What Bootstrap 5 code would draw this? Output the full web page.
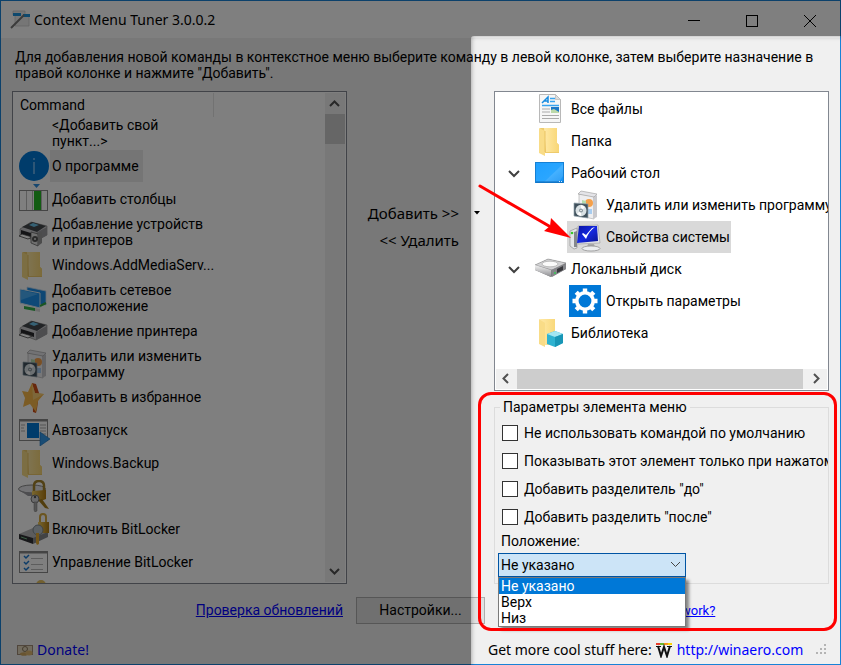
<!DOCTYPE html>
<html lang="ru">
<head>
<meta charset="utf-8">
<meta name="viewport" content="width=device-width, initial-scale=1">
<title>Context Menu Tuner 3.0.0.2</title>
<link href="https://cdn.jsdelivr.net/npm/bootstrap@5.3.0/dist/css/bootstrap.min.css" rel="stylesheet">
<style>
  :root { --ui: Roboto, "Liberation Sans", sans-serif; --caption: "Noto Sans", "Open Sans", sans-serif; }
  body { font: 14px/16px var(--ui); color: #000; background: #f0f0f0; }
  .stage { min-height: 100vh; overflow: hidden; }
  .window { border: 1px solid #1883d7; background: #f0f0f0; }
  .titlebar { background: #fff; height: 37px; padding: 0 1px 0 9px; }
  .titlebar h1 { font: 14px/20px var(--caption); }
  .win-btn { width: 58px; height: 36px; padding: 0; border: 0; background: none; }
  .plain-btn { border: 0; background: none; padding: 0; color: #000; }
  a { color: #00f; }
  .intro { padding: 11px 14px 10px; }
  .columns { display: grid; grid-template-columns: minmax(0, 1fr) 147px minmax(0, 1fr); padding: 0 11px; }
  .pane { background: #fff; border: 1px solid #828790; }
  .cmd-head { height: 24px; padding: 1px 0 0 7px; }
  .cmd-head span { width: 194px; height: 24px; line-height: 24px; border-right: 1px solid #e5e5e5; }
  .cmd-list { height: 467px; overflow: hidden; }
  .cmd { height: 33px; padding-left: 5px; }
  .cmd svg { width: 32px; height: 32px; flex: none; }
  .cmd span { padding: 0 4px 0 2px; line-height: 16px; }
  .cmd.chosen span { background: #ebebeb; line-height: 32px; }
  .vbar { width: 21px; background: #f0f0f0; border: 1px solid #fff; border-left: 0; }
  .vthumb { height: 30px; background: #cdcdcd; }
  .actions { padding-top: 112px; font: 15px/20px var(--caption); }
  .actions .row-a { height: 27px; padding-right: 14px; gap: 15px; }
  .actions .row-b { padding-right: 35px; }
  .tree { height: 300px; }
  .tree-list { padding-top: 1px; }
  .tree-row { height: 32px; padding-left: 10px; white-space: nowrap; }
  .tree-row svg { flex: none; }
  .tree-row .twist { width: 18px; height: 32px; }
  .tree-row .label { padding-left: 4px; }
  .tree-row.sub { padding-left: 72px; }
  .tree-row.sub .label { padding-left: 5px; }
  .tree-row.chosen span.wrap { background: #d9d9d9; }
  .tree-row .wrap { padding: 0 1px 0 2px; }
  .hbar { height: 20px; background: #f0f0f0; margin: 0 1px 1px; }
  .hthumb { background: #cdcdcd; margin-right: 3px; }
  .group { height: 177px; margin-top: 16px; border: 1px solid #dcdcdc; }
  .group legend { float: none; width: auto; font: inherit; line-height: 16px; margin: -9px 0 4px 5px; padding: 0 3px; background: #f0f0f0; }
  .opts { padding-bottom: 2px; }
  .opt { height: 28px; margin-left: 7px; white-space: nowrap; overflow: hidden; }
  .opt .form-check-input { width: 16px; height: 16px; margin: 0; border: 1px solid #333; border-radius: 0; background: #fff; flex: none; float: none; }
  .opt label { padding-left: 6px; }
  .pos-label { padding-left: 6px; }
  .combo { width: 188px; margin-left: 3px; }
  .combo select { width: 100%; height: 24px; border: 1px solid #0054a3; border-radius: 0; padding: 0 2px; background: #cce4f7; color: #000; appearance: none; font: inherit; display: block; }
  .combo svg { top: 8px; right: 5px; pointer-events: none; }
  .droplist { top: 24px; left: 0; right: 0; background: #fff; border: 1px solid #7a7a7a; box-shadow: 3px 3px 3px rgba(0,0,0,.45); z-index: 2; }
  .droplist li { padding-left: 2px; }
  .droplist li.chosen { background: #0078d7; color: #fff; }
  .links { padding: 18px 4px 0 3px; height: 42px; }
  .links.mid { padding: 13px 0 0 9px; }
  .links .settings { width: 129px; height: 27px; padding-bottom: 2px; border: 1px solid #adadad; background: #e1e1e1; }
  .links .how { font-size: 13px; padding-left: 3px; }
  .foot { height: 28px; padding: 0 13px 0 16px; font: 14px/20px var(--caption); }
  .foot a { text-decoration: none; }
  .foot .more { width: 339px; }
  .shade { top: 36px; left: 471px; right: -12px; bottom: -12px; border-radius: 3px; box-shadow: 0 0 5px 2000px rgba(0,0,0,.5), inset 0 0 5px rgba(0,0,0,.4); pointer-events: none; z-index: 4; }
  .callout { top: -16px; left: -17px; right: -9px; bottom: -48px; border: 3px solid #f00; border-radius: 13px; pointer-events: none; z-index: 5; }
  .pointer { top: 91px; left: -17px; pointer-events: none; z-index: 5; }
</style>
<script src="https://cdn.jsdelivr.net/npm/bootstrap@5.3.0/dist/js/bootstrap.bundle.min.js"></script>
</head>
<body>
<svg class="position-absolute" width="0" height="0" aria-hidden="true">
  <defs>
    <linearGradient id="gFold" x1="0" x2="1"><stop offset="0" stop-color="#ffe9a6"/><stop offset="1" stop-color="#f8d675"/></linearGradient>
    <linearGradient id="gScr" x1="0" y1="0" x2="1" y2="1"><stop offset="0" stop-color="#1fa0ff"/><stop offset=".6" stop-color="#2aa6ff"/><stop offset="1" stop-color="#1090f4"/></linearGradient>
    <linearGradient id="gNavy" x1="0" y1="0" x2="1" y2="1"><stop offset="0" stop-color="#0a14a0"/><stop offset=".5" stop-color="#1428e0"/><stop offset="1" stop-color="#0a1490"/></linearGradient>
    <linearGradient id="gSteel" x1="0" y1="0" x2="0" y2="1"><stop offset="0" stop-color="#f4f4f4"/><stop offset="1" stop-color="#8c8c90"/></linearGradient>
    <linearGradient id="gGold" x1="0" x2="1"><stop offset="0" stop-color="#f5cf60"/><stop offset="1" stop-color="#b07a10"/></linearGradient>
  </defs>
  <symbol id="i-info" viewBox="0 0 32 32"><circle cx="16" cy="16" r="15" fill="#0078d7"/><path d="M16 12v12M16 8v2" stroke="#8fc8f8" stroke-width="1.300"/></symbol>
  <symbol id="i-cols" viewBox="0 0 32 32"><path d="M15 1h7l-3.500 4z" fill="#2f8fe0"/><rect x="1.500" y="7.500" width="28" height="20" fill="#fff" stroke="#8a8a8a"/><path d="M8.500 8v19M14.500 8v19" stroke="#bbb"/><rect x="16" y="8" width="7" height="19" fill="#25b925"/><path d="M23.500 8v19" stroke="#bbb"/></symbol>
  <symbol id="i-printer" viewBox="0 0 32 32"><path d="M2 13l11-7 16 4v9l-11 6-16-6z" fill="#c9c9cc" stroke="#777" stroke-width=".6"/><path d="M4 11l10-5 14 4-9 6z" fill="#45484d"/><path d="M11 9l4-2 6 2-5 2z" fill="#6cc2e8"/><path d="M18 17l11-6v8l-11 6z" fill="#9a9a9e"/><path d="M3 14l13 4v4L3 18z" fill="#28282c"/><path d="M4 18l10 3-4 2-9-3z" fill="#fff" stroke="#444" stroke-width=".8"/></symbol>
  <symbol id="i-devices" viewBox="0 0 32 32"><use href="#i-printer" width="32" height="32"/><path d="M13 16l7 2v12l-7-3z" fill="#dedede" stroke="#555" stroke-width=".7"/><path d="M20 18l4-2v11l-4 3z" fill="#999"/><circle cx="17" cy="23" r="3" fill="#555"/><circle cx="17" cy="23" r="1" fill="#ddd"/></symbol>
  <symbol id="i-folder" viewBox="0 0 32 32"><path d="M5 3h17v15l2 2v8H10z" fill="#eecb6c"/><path d="M9 3h13v15l2 2v7H11z" fill="url(#gFold)"/><path d="M4 3l6 3v25l-6-3z" fill="#f9dc87"/><path d="M10 6v21" stroke="#e6bc58" stroke-width=".8"/></symbol>
  <symbol id="i-net" viewBox="0 0 32 32"><path d="M9 5l19 4v14l-19-2z" fill="#1d8ee8" stroke="#cde" stroke-width=".8"/><path d="M2 7l20 4v15L2 21z" fill="#1c93ef" stroke="#d5e8f5"/><path d="M3 8l17 4L3 18z" fill="#48aef8"/><path d="M6 24l11 2v3L6 27z" fill="#35b04a"/><path d="M17 26l5 1v3l-5-1z" fill="#ddd"/><path d="M22 24l6-3" stroke="#3a4" stroke-width="2"/></symbol>
  <symbol id="i-program" viewBox="0 0 32 32"><path d="M10 5l15 2v23l-15-3z" fill="#eeeef0" stroke="#aaa" stroke-width=".6"/><path d="M24 8l4-2v22l-4 2z" fill="#c9c9cd"/><path d="M9 5l3-3 16 3-3 3z" fill="#e4e4e8" stroke="#999" stroke-width=".6"/><circle cx="20" cy="14" r="4" fill="#f5a04a"/><path d="M13 11l4 1v4l-4-1z" fill="#b5dcae"/><path d="M18 20h5v5h-5z" fill="#a8cdf0"/><path d="M5 14l14 1v14L5 27z" fill="#40515c" stroke="#93a4ae" stroke-width=".7"/><ellipse cx="12" cy="21.500" rx="5.500" ry="5.800" fill="#d9e1e4"/><path d="M12 16l4 2-4 4zM12 27l-4-2 4-4z" fill="#fff"/><circle cx="12" cy="21.500" r="2" fill="#87949c"/><circle cx="12" cy="21.500" r=".8" fill="#fff"/></symbol>
  <symbol id="i-star" viewBox="0 0 32 32"><path d="M14 2l4 1 3 9-2 16-1 4-3-1z" fill="#cf4f18"/><path d="M14 2l3 10 9 1-6 7-2 11-6-8-7 3 2-9-3-7 6 1z" fill="#f8b84a"/><path d="M14 2l3 10 9 1-11 6z" fill="#fbcf75"/></symbol>
  <symbol id="i-autorun" viewBox="0 0 32 32"><rect x="1.500" y="5.500" width="28" height="21" fill="#fff" stroke="#8a8a8a"/><path d="M2 6.500h27" stroke="#888" stroke-width="2"/><path d="M3 11h4M3 14h3M3 17h4M22 11h6M22 14h6M22 17h6M22 20h6" stroke="#aaa"/><rect x="9" y="9" width="12" height="15" fill="#0078d7"/><path d="M22 18v14l10-7z" fill="#3398e8" stroke="#1a70b8" stroke-width=".6"/></symbol>
  <symbol id="i-keys" viewBox="0 0 32 32"><ellipse cx="14" cy="9" rx="13.500" ry="4" fill="#e4e4e8" stroke="#888"/><path d="M1 10q12 6 26 0l-8 6H10z" fill="#9b9ba0"/><path d="M16 12V6q0-5 5-5t5 5v6" fill="none" stroke="#a5842e" stroke-width="2.500"/><path d="M14 11l14-1v9l-5 2-9-2z" fill="url(#gGold)"/><path d="M24 19l7 10-4-1-7-8z" fill="#a47c1c"/><circle cx="17" cy="19" r="4" fill="#d4d4d6" stroke="#777"/><circle cx="17" cy="17" r="1.200" fill="#555"/><path d="M16 22h3v9l-2 1-1-2z" fill="#aaa" stroke="#777" stroke-width=".5"/></symbol>
  <symbol id="i-lockon" viewBox="0 0 32 32"><path d="M1 21l14-6 15 4v4l-14 7-15-5z" fill="#b8b8ba"/><path d="M1 21l14 4v6L1 26z" fill="#303134"/><path d="M3 24l6 2" stroke="#7b8" stroke-width="1"/><path d="M15 25l15-6v5l-15 7z" fill="#85868a"/><path d="M22 10V4q0-3 3-3t3 3v6" fill="none" stroke="#d7aa3e" stroke-width="2"/><path d="M20 9h11v11H20z" fill="url(#gGold)"/><circle cx="20" cy="17" r="5" fill="#b9c3ca" stroke="#7d878e"/><path d="M18 20h3v11l-2 1-1-2z" fill="#e4ab33"/></symbol>
  <symbol id="i-checks" viewBox="0 0 32 32"><rect x="1.500" y="5.500" width="28" height="21" fill="#fff" stroke="#8a8a8a"/><path d="M2 6.500h27" stroke="#888" stroke-width="2"/><path d="M6 10l2 2 3-3M6 16l2 2 3-3M6 22l2 2 3-3" fill="none" stroke="#1878d0" stroke-width="1.500"/><path d="M13 12.500h12M13 18.500h12M13 23.500h12" stroke="#bbb"/></symbol>
  <symbol id="i-doc" viewBox="0 0 32 32"><path d="M4.500 1.500h16l5 5v23h-21z" fill="#f6f6f6" stroke="#b8b8b8"/><path d="M20.500 1.500v5h5z" fill="#ddd" stroke="#b8b8b8" stroke-width=".7"/><path d="M7 10l6-6 0 6M9 8h4" stroke="#168be0" stroke-width="1.500" fill="none"/><path d="M15 5.500h5M15 8.500h5M7 12.500h17" stroke="#38a4f0" stroke-width="1.300"/><path d="M7 16h8M7 19h8M7 22.500h17M7 25.500h17" stroke="#aaa" stroke-width="1.200"/><rect x="16" y="14" width="8" height="6" fill="#1c78c8"/><path d="M16 17l3-1 5 3v1h-8z" fill="#bbd8a8"/></symbol>
  <symbol id="i-desktop" viewBox="0 0 32 32"><rect x="0" y="5" width="29" height="21" fill="#1580d4"/><rect x="1" y="6" width="27" height="19" fill="url(#gScr)"/><path d="M28 7L9 25h15l4-6z" fill="#fff" opacity=".12"/><path d="M1 25h27" stroke="#106ab8"/><path d="M24 24.500h4" stroke="#cfe8ff" stroke-dasharray="1"/></symbol>
  <symbol id="i-system" viewBox="0 0 32 32"><path d="M1 10l7-3v20l-3 1-4-3z" fill="#e4e6e9" stroke="#888" stroke-width=".6"/><path d="M5 11l3-1v16H5z" fill="#85888d"/><circle cx="3" cy="12" r="1.300" fill="#38c828"/><path d="M9 5l20-1 2 18-22 1z" fill="#e2e4e8" stroke="#999" stroke-width=".6"/><path d="M10 5l18 0 1 15-21 2z" fill="url(#gNavy)"/><path d="M13 13l4 5q3-8 9-12l-3 1-6 7-3-2z" fill="#fff"/><path d="M19 23h6l1 3h-8z" fill="#aaa"/><ellipse cx="22" cy="27.500" rx="9" ry="2.500" fill="#eceef0" stroke="#888" stroke-width=".7"/></symbol>
  <symbol id="i-disk" viewBox="0 0 32 32"><path d="M0 12l13-6 18 4v6L16 24 0 17z" fill="#77777a"/><path d="M0 12l13-6 18 4-14 7z" fill="#d2d2d4" stroke="#888" stroke-width=".5"/><path d="M0 12l16 5v7L0 17z" fill="url(#gSteel)"/><ellipse cx="15" cy="11" rx="8" ry="2.800" fill="#fafafa" stroke="#aaa" stroke-width=".7"/><path d="M16 17l15-6v5l-14 8z" fill="#86868a"/><path d="M22 16l6-3v4l-6 3z" fill="#38383c"/><circle cx="20" cy="20" r="1" fill="#3c5"/></symbol>
  <symbol id="i-gear" viewBox="0 0 32 32"><rect width="32" height="32" fill="#0078d7"/><circle cx="16" cy="16" r="8.200" fill="none" stroke="#fff" stroke-width="3.600"/><g stroke="#fff" stroke-width="4.400"><path d="M16 3.500v4M16 24.500v4M3.500 16h4M24.500 16h4"/><path d="M7.200 7.200L10 10M22 22l2.800 2.800M24.800 7.200L22 10M10 22l-2.800 2.800"/></g></symbol>
  <symbol id="i-library" viewBox="0 0 32 32"><path d="M5 2h15v18l2 1v7H10z" fill="url(#gFold)"/><path d="M4 2l6 4v24l-6-3z" fill="#f9dc87"/><path d="M12 17l8-3 8 3v9l-8 4-8-3z" fill="#2eb2d0"/><path d="M12 17l8-3 8 3-8 3z" fill="#a2e6f2"/><path d="M20 20l8-3v9l-8 4z" fill="#1896b6"/></symbol>
  <symbol id="i-vpn" viewBox="0 0 32 32"><circle cx="23" cy="6" r="5" fill="#e4c060"/></symbol>
</svg>

<div class="stage position-relative d-flex">
<main class="window flex-grow-1 d-flex flex-column">
  <header class="titlebar d-flex align-items-center">
    <svg width="20" height="20" viewBox="0 0 20 20" aria-hidden="true"><path d="M3 1h12v5h4v10H5V5H3z" fill="#ededed" stroke="#c4c4c4" stroke-width=".7"/><path d="M3 3h8v3H3zM13 4h7v3h-7z" fill="#1d93dc"/><path d="M1 18L14 5" stroke="#777" stroke-width="2"/></svg>
    <h1 class="mb-0 ms-1 flex-grow-1">Context Menu Tuner 3.0.0.2</h1>
    <button class="win-btn" aria-label="Свернуть"><svg width="12" height="12"><path d="M0 5.500h12" stroke="#000"/></svg></button>
    <button class="win-btn" aria-label="Развернуть"><svg width="12" height="12"><rect x=".5" y=".5" width="11" height="11" fill="none" stroke="#000"/></svg></button>
    <button class="win-btn" aria-label="Закрыть"><svg width="12" height="12"><path d="M0 0l12 12M12 0L0 12" stroke="#000"/></svg></button>
  </header>

  <p class="intro mb-0">Для добавления новой команды в контекстное меню выберите команду в левой колонке, затем выберите назначение в правой колонке и нажмите "Добавить".</p>

  <div class="columns">
    <section class="pane d-flex">
      <div class="flex-grow-1">
        <div class="cmd-head"><span class="d-block">Command</span></div>
        <ul class="cmd-list list-unstyled mb-0">
          <li class="cmd d-flex align-items-center"><svg></svg><span>&lt;Добавить свой<br>пункт...&gt;</span></li>
          <li class="cmd chosen d-flex align-items-center"><svg><use href="#i-info"/></svg><span>О программе</span></li>
          <li class="cmd d-flex align-items-center"><svg><use href="#i-cols"/></svg><span>Добавить столбцы</span></li>
          <li class="cmd d-flex align-items-center"><svg><use href="#i-devices"/></svg><span>Добавление устройств<br>и принтеров</span></li>
          <li class="cmd d-flex align-items-center"><svg><use href="#i-folder"/></svg><span>Windows.AddMediaServ...</span></li>
          <li class="cmd d-flex align-items-center"><svg><use href="#i-net"/></svg><span>Добавить сетевое<br>расположение</span></li>
          <li class="cmd d-flex align-items-center"><svg><use href="#i-printer"/></svg><span>Добавление принтера</span></li>
          <li class="cmd d-flex align-items-center"><svg><use href="#i-program"/></svg><span>Удалить или изменить<br>программу</span></li>
          <li class="cmd d-flex align-items-center"><svg><use href="#i-star"/></svg><span>Добавить в избранное</span></li>
          <li class="cmd d-flex align-items-center"><svg><use href="#i-autorun"/></svg><span>Автозапуск</span></li>
          <li class="cmd d-flex align-items-center"><svg><use href="#i-folder"/></svg><span>Windows.Backup</span></li>
          <li class="cmd d-flex align-items-center"><svg><use href="#i-keys"/></svg><span>BitLocker</span></li>
          <li class="cmd d-flex align-items-center"><svg><use href="#i-lockon"/></svg><span>Включить BitLocker</span></li>
          <li class="cmd d-flex align-items-center"><svg><use href="#i-checks"/></svg><span>Управление BitLocker</span></li>
          <li class="cmd d-flex align-items-center"><svg><use href="#i-vpn"/></svg></li>
        </ul>
      </div>
      <div class="vbar d-flex flex-column align-items-stretch">
        <svg width="20" height="21" fill="none" stroke="#505050" stroke-width="2"><path d="M5 13l4.500-4.500L14 13"/></svg>
        <div class="vthumb"></div>
        <svg class="mt-auto" width="20" height="21" fill="none" stroke="#505050" stroke-width="2"><path d="M5 8l4.500 4.500L14 8"/></svg>
      </div>
    </section>

    <div class="actions">
      <div class="row-a d-flex justify-content-end align-items-start">
        <button class="plain-btn">Добавить &gt;&gt;</button>
        <button class="plain-btn" aria-label="Ещё"><svg class="d-block my-2" width="6" height="4"><path d="M0 0h6L3 3.500z"/></svg></button>
      </div>
      <div class="row-b d-flex justify-content-end">
        <button class="plain-btn">&lt;&lt; Удалить</button>
      </div>
    </div>

    <div class="position-relative">
      <section class="pane tree d-flex flex-column">
        <ul class="tree-list list-unstyled mb-0 flex-grow-1 overflow-hidden">
          <li class="tree-row d-flex align-items-center"><span class="twist"></span><svg class="ms-2 ps-1" width="36" height="32"><use href="#i-doc" width="32" height="32"/></svg><span class="label">Все файлы</span></li>
          <li class="tree-row d-flex align-items-center"><span class="twist"></span><svg class="ms-2 ps-1" width="36" height="32"><use href="#i-folder" width="32" height="32"/></svg><span class="label">Папка</span></li>
          <li class="tree-row d-flex align-items-center"><button class="twist plain-btn" aria-label="Свернуть ветку"><svg width="12" height="8" fill="none" stroke="#404040" stroke-width="2"><path d="M1 1l5 5 5-5"/></svg></button><svg class="ms-2 ps-1" width="36" height="32"><use href="#i-desktop" width="32" height="32"/></svg><span class="label">Рабочий стол</span></li>
          <li class="tree-row sub d-flex align-items-center"><span class="wrap d-flex align-items-center"><svg width="32" height="32"><use href="#i-program"/></svg><span class="label">Удалить или изменить программу</span></span></li>
          <li class="tree-row sub chosen d-flex align-items-center"><span class="wrap d-flex align-items-center"><svg width="32" height="32"><use href="#i-system"/></svg><span class="label">Свойства системы</span></span></li>
          <li class="tree-row d-flex align-items-center"><button class="twist plain-btn" aria-label="Свернуть ветку"><svg width="12" height="8" fill="none" stroke="#404040" stroke-width="2"><path d="M1 1l5 5 5-5"/></svg></button><svg class="ms-2 ps-1" width="36" height="32"><use href="#i-disk" width="32" height="32"/></svg><span class="label">Локальный диск</span></li>
          <li class="tree-row sub d-flex align-items-center"><span class="wrap d-flex align-items-center"><svg width="32" height="32"><use href="#i-gear"/></svg><span class="label">Открыть параметры</span></span></li>
          <li class="tree-row d-flex align-items-center"><span class="twist"></span><svg class="ms-2 ps-1" width="36" height="32"><use href="#i-library" width="32" height="32"/></svg><span class="label">Библиотека</span></li>
        </ul>
        <div class="hbar d-flex">
          <svg width="21" height="20" fill="none" stroke="#505050" stroke-width="2"><path d="M12 5L7.500 9.500 12 14"/></svg>
          <div class="hthumb flex-grow-1"></div>
          <svg width="21" height="20" fill="none" stroke="#505050" stroke-width="2"><path d="M8 5l4.500 4.500L8 14"/></svg>
        </div>
      </section>
      <svg class="pointer position-absolute" width="98" height="64"><path d="M3 4l69 40" stroke="#f00" stroke-width="3" stroke-linecap="round"/><path d="M94 56L67 49l6-5 1-8z" fill="#f00"/></svg>

      <form class="group position-relative">
        <div class="callout position-absolute"></div>
        <legend class="d-table">Параметры элемента меню</legend>
        <div class="opts">
          <div class="opt d-flex align-items-center"><input class="form-check-input" type="checkbox" id="o1"><label for="o1">Не использовать командой по умолчанию</label></div>
          <div class="opt d-flex align-items-center"><input class="form-check-input" type="checkbox" id="o2"><label for="o2">Показывать этот элемент только при нажатом</label></div>
          <div class="opt d-flex align-items-center"><input class="form-check-input" type="checkbox" id="o3"><label for="o3">Добавить разделитель "до"</label></div>
          <div class="opt d-flex align-items-center"><input class="form-check-input" type="checkbox" id="o4"><label for="o4">Добавить разделить "после"</label></div>
        </div>
        <label class="pos-label d-block mb-1" for="pos">Положение:</label>
        <div class="combo position-relative">
          <select id="pos"><option>Не указано</option><option>Верх</option><option>Низ</option></select>
          <svg class="position-absolute" width="11" height="8" fill="none" stroke="#444"><path d="M1 1l4.500 4.500L10 1"/></svg>
          <ul class="droplist position-absolute list-unstyled mb-0" role="listbox" aria-label="Положение">
            <li class="chosen" role="option" aria-selected="true">Не указано</li>
            <li role="option">Верх</li>
            <li role="option">Низ</li>
          </ul>
        </div>
      </form>
    </div>
  </div>

  <nav class="columns">
    <div class="links text-end"><a href="#">Проверка обновлений</a></div>
    <div class="links mid"><button class="settings plain-btn">Настройки...</button></div>
    <div class="links"><a class="how" href="#">How does Context Menu Tuner work?</a></div>
  </nav>

  <footer class="foot mt-auto d-flex align-items-center">
    <svg width="16" height="16" viewBox="0 0 16 16" aria-hidden="true"><rect x=".5" y="3.500" width="15" height="9" fill="#e3d6bc" stroke="#a08c78"/><circle cx="8" cy="7" r="2.500" fill="none" stroke="#8a7a5c"/><ellipse cx="7" cy="12" rx="4" ry="1.800" fill="#d0a860"/><ellipse cx="12" cy="11" rx="3.500" ry="2.500" fill="#e0b870"/></svg>
    <a class="ms-1" href="#">Donate!</a>
    <div class="more ms-auto d-flex align-items-center">
      <span>Get more cool stuff here:</span>
      <svg class="ms-1 me-1" width="17" height="16" viewBox="0 0 17 16" aria-hidden="true"><path d="M0 1h4v2H0z" fill="#e8402c"/><path d="M4 1h4v2H4z" fill="#6cb52d"/><path d="M8 1h4v2H8z" fill="#f7941e"/><path d="M12 1h4v2h-4z" fill="#ffd400"/><path d="M0 4.500h5M11 4.500h5" stroke="#111"/><path d="M2 4l3 10L8 5l3 9 3-10" fill="none" stroke="#111" stroke-width="2"/></svg>
      <a href="#">http://winaero.com</a>
      <svg class="ms-auto" width="12" height="12" fill="#b4b4b4" aria-hidden="true"><path d="M9 0h2v2H9zM9 4h2v2H9zM9 8h2v2H9zM5 4h2v2H5zM5 8h2v2H5zM1 8h2v2H1z"/></svg>
    </div>
  </footer>
</main>
<div class="shade position-absolute"></div>
</div>
</body>
</html>
